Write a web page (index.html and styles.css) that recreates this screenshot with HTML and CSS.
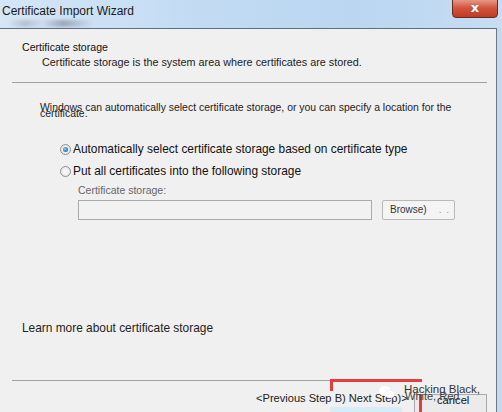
FILE: index.html
```html
<!DOCTYPE html>
<html>
<head>
<meta charset="utf-8">
<link rel="stylesheet" href="styles.css">
</head>
<body>
<div class="window">
  <div class="titlebar">
    <span class="title">Certificate Import Wizard</span>
    <span class="smudge"></span>
    <div class="close"><span>x</span></div>
  </div>
  <div class="body">
    <div class="panel">
      <div class="header">
        <div class="h-title">Certificate storage</div>
        <div class="h-sub">Certificate storage is the system area where certificates are stored.</div>
      </div>
      <div class="sep"></div>
      <div class="content">
        <div class="intro">Windows can automatically select certificate storage, or you can specify a location for the<br>certificate.</div>
        <div class="options">
          <div class="opt"><span class="radio checked"></span>Automatically select certificate storage based on certificate type</div>
          <div class="opt"><span class="radio"></span>Put all certificates into the following storage</div>
          <div class="store">
            <div class="store-label">Certificate storage:</div>
            <div class="store-row">
              <div class="field"></div>
              <div class="browse">Browse)<span class="dots">. .</span></div>
            </div>
          </div>
        </div>
        <div class="learn">Learn more about certificate storage</div>
      </div>
      <div class="footer">
        <div class="sep2"></div>
        <div class="buttons">
          <span class="cancel-btn"></span>
          <span class="blur"></span>
          <span class="navtext">&lt;Previous Step B) Next Step)&gt;</span>
          <span class="cancel">cancel</span>
        </div>
        <div class="redbox"></div>
        <div class="redline"></div>
        <div class="watermark">
          <svg class="wm-icon" width="18" height="14" viewBox="0 0 18 14"><ellipse cx="7" cy="6" rx="6" ry="5" fill="#fff"/><ellipse cx="12" cy="9" rx="5" ry="4" fill="#fff" stroke="#ddd" stroke-width="0.6"/></svg>
          <span class="wm1">Hacking Black,</span>
          <span class="wm2">White, Red</span>
        </div>
      </div>
    </div>
    <div class="frame"></div>
  </div>
</div>
</body>
</html>
```

FILE: styles.css
```css
* { box-sizing: border-box; }
html, body { margin: 0; padding: 0; }
body { width: 502px; height: 412px; overflow: hidden; font-family: "Liberation Sans", Arial, sans-serif; color: #222; }
.window { width: 502px; height: 412px; display: flex; flex-direction: column; background: #c9def2; }
.titlebar { height: 28px; position: relative; background: linear-gradient(90deg, #d5e6f6 0%, #c2dbf3 40%, #bad6f1 70%, #c6ddf3 100%); display: flex; align-items: flex-start; }
.title { font-size: 12px; color: #1a1a1a; margin: 4px 0 0 2px; }
.smudge { position: absolute; left: 8px; top: 20px; width: 85px; height: 7px; background: linear-gradient(90deg, rgba(150,160,175,0) 0%, rgba(150,160,175,0.5) 20%, rgba(200,210,220,0.3) 40%, rgba(120,130,145,0.6) 65%, rgba(150,160,175,0) 100%); filter: blur(1.5px); }
.close { position: absolute; left: 452px; top: -2px; width: 46px; height: 20px; border: 1px solid #6a2a22; border-radius: 0 0 4px 4px; background: linear-gradient(#e8a090 0%, #d2543e 50%, #c03a24 100%); display: flex; justify-content: center; align-items: center; }
.close span { color: #fff; font-weight: bold; font-size: 13px; font-family: "DejaVu Sans", sans-serif; text-shadow: 0 0 1px #555; margin-top: -2px; }
.body { flex: 1; display: flex; }
.panel { width: 497px; background: #f0f0f0; border-top: 1px solid #5f6f7e; border-right: 1px solid #6a7888; position: relative; display: flex; flex-direction: column; }
.frame { width: 5px; background: #c2d9ef; }
.header { padding: 12px 0 0 22px; height: 53px; }
.h-title { font-size: 10.6px; color: #111; }
.h-sub { font-size: 10.8px; color: #222; margin: 3px 0 0 20px; }
.sep { height: 1px; background: #a0a0a0; margin: 0 9px 0 12px; }
.content { flex: 1; padding: 0 0 0 22px; display: flex; flex-direction: column; }
.intro { font-size: 10.45px; line-height: 6px; color: #222; margin: 22px 0 0 18px; }
.options { margin: 21px 0 0 38px; }
.opt { font-size: 11.9px; color: #111; display: flex; align-items: center; height: 22px; }
.radio { width: 11px; height: 11px; border-radius: 50%; border: 1px solid #8e8f8f; background: radial-gradient(circle, #fafafa 0%, #e2e2e2 100%); margin-right: 2px; display: inline-block; position: relative; }
.radio.checked::after { content: ""; position: absolute; left: 2px; top: 2px; width: 5px; height: 5px; border-radius: 50%; background: radial-gradient(circle at 40% 40%, #8ed0ff 0%, #1c6fbf 70%, #164f8a 100%); }
.store { margin: 0 0 0 18px; }
.store-label { font-size: 10.5px; color: #666; margin-top: 2px; }
.store-row { display: flex; margin-top: 4px; align-items: center; }
.field { width: 294px; height: 20px; border: 1px solid #ababab; background: #f2f2f2; }
.browse { margin-left: 10px; width: 73px; height: 20px; border: 1px solid #b8b8b8; border-radius: 2px; background: #f4f4f4; font-size: 10px; color: #333; padding: 3px 0 0 7px; }
.browse .dots { margin-left: 12px; color: #999; letter-spacing: 1px; }
.learn { font-size: 11.9px; color: #222; margin-top: auto; margin-bottom: 45px; }
.footer { height: 32px; position: relative; }
.sep2 { height: 1px; background: #a0a0a0; margin: 0 0 0 12px; width: 408px; }
.buttons { position: relative; height: 31px; }
.cancel-btn { position: absolute; left: 414px; top: 13px; width: 73px; height: 20px; border: 1px solid #a8a8a8; border-bottom: none; background: #ebebeb; }
.blur { position: absolute; left: 330px; top: 26px; width: 72px; height: 6px; background: #d6ecf7; }
.navtext { position: absolute; left: 256px; top: 11px; font-size: 11.1px; color: #222; }
.cancel { position: absolute; left: 437px; top: 13px; font-size: 11.2px; color: #111; }
.redbox { position: absolute; left: 330px; top: -1px; width: 92px; height: 12px; border-top: 3px solid #e33d3d; border-left: 3px solid #e33d3d; }
.redline { position: absolute; left: 419px; top: 14px; width: 3px; height: 20px; background: #e33d3d; }
.watermark { position: absolute; left: 378px; top: 3px; width: 110px; height: 28px; }
.wm-icon { position: absolute; left: 0; top: 2px; }
.wm1 { position: absolute; left: 26px; top: 0; font-size: 11.5px; color: #333; }
.wm2 { position: absolute; left: 27px; top: 7px; font-size: 11px; color: #444; }
```
